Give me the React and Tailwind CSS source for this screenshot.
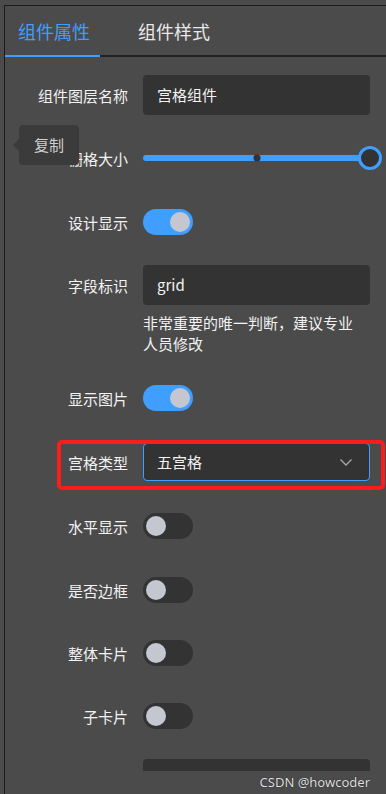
import React from "react";

const font = { fontFamily: '"Noto Sans CJK SC", "Noto Sans", sans-serif' };

function Switch({ on }) {
  return (
    <div
      className={
        "relative w-[50px] h-[26px] rounded-full " +
        (on ? "bg-[#409eff]" : "bg-[#333333]")
      }
    >
      <div
        className={
          "absolute top-[3px] w-[20px] h-[20px] rounded-full bg-[#c4c7cf] " +
          (on ? "left-[27px]" : "left-[3px]")
        }
      />
    </div>
  );
}

function Row({ label, mb, children }) {
  return (
    <div className={"flex items-center h-[40px] " + mb}>
      <div className="w-[123px] text-right text-[15px] text-[#f2f2f2] shrink-0 leading-none">
        {label}
      </div>
      <div className="ml-[15px] flex-1 h-full flex items-center">{children}</div>
    </div>
  );
}

export default function App() {
  return (
    <div
      className="relative w-[386px] h-[794px] bg-[#4b4b4b] overflow-hidden pt-[5px] pl-[4px]"
      style={font}
    >
      <div className="border-t border-l border-[#1c1c1c] h-full">
        {/* Tabs */}
        <div className="flex items-center h-[49px]">
          <div className="w-[95px] pl-[13px] text-[18px] text-[#409eff] leading-none">
            组件属性
          </div>
          <div className="pl-[38px] text-[18px] text-[#e8e8e8] leading-none">
            组件样式
          </div>
        </div>
        <div className="h-[2px] bg-[#222222] flex">
          <div className="w-[95px] h-full bg-[#409eff]" />
        </div>

        {/* Form */}
        <div className="pt-[18px] pr-[16px]">
          <Row label="组件图层名称" mb="mb-[23px]">
            <div className="w-full h-[40px] rounded-[4px] bg-[#333333] flex items-center pl-[14px] text-[15px] text-[#f2f2f2]">
              宫格组件
            </div>
          </Row>
          <Row label="栅格大小" mb="mb-[24px]">
            <div className="relative w-full h-[6px] rounded-full bg-[#409eff]">
              <div className="absolute left-1/2 top-1/2 -translate-x-1/2 -translate-y-1/2 w-[7px] h-[7px] rounded-full bg-[#333333]" />
              <div className="absolute right-[-12px] top-1/2 -translate-y-1/2 w-[24px] h-[24px] rounded-full bg-[#333333] border-[3px] border-[#409eff]" />
            </div>
          </Row>
          <Row label="设计显示" mb="mb-[23px]">
            <Switch on />
          </Row>
          <Row label="字段标识" mb="">
            <div className="w-full h-[40px] rounded-[4px] bg-[#333333] flex items-center pl-[14px] text-[15px] text-[#f2f2f2]">
              grid
            </div>
          </Row>
          <div className="ml-[138px] mt-[7px] mb-[24px] text-[15px] leading-[21px] text-[#f2f2f2]">
            非常重要的唯一判断，建议专业
            <br />
            人员修改
          </div>
          <Row label="显示图片" mb="mb-[24px]">
            <Switch on />
          </Row>
          <Row label="宫格类型" mb="mb-[24px]">
            <div className="w-full h-[38px] rounded-[4px] bg-[#333333] border border-[#409eff] flex items-center justify-between pl-[13px] pr-[16px] text-[15px] text-[#f2f2f2]">
              <span>五宫格</span>
              <svg width="14" height="14" viewBox="0 0 14 14" fill="none">
                <path d="M1.5 4.5 L7 10 L12.5 4.5" stroke="#a8a8a8" strokeWidth="1.3" />
              </svg>
            </div>
          </Row>
          <Row label="水平显示" mb="mb-[24px]">
            <Switch />
          </Row>
          <Row label="是否边框" mb="mb-[23px]">
            <Switch />
          </Row>
          <Row label="整体卡片" mb="mb-[23px]">
            <Switch />
          </Row>
          <Row label="子卡片" mb="mb-[23px]">
            <Switch />
          </Row>
          <Row label="" mb="">
            <div className="w-full h-[40px] rounded-[4px] bg-[#333333]" />
          </Row>
        </div>
      </div>

      {/* Tooltip */}
      <div className="absolute left-[19px] top-[125px] w-[60px] h-[40px] rounded-[4px] bg-[#3b3b3c] flex items-center justify-center text-[15px] text-[#cfcfcf]">
        复制
        <div className="absolute left-[-6px] top-1/2 -translate-y-1/2 w-0 h-0 border-y-[6px] border-y-transparent border-r-[6px] border-r-[#3b3b3c]" />
      </div>

      {/* Red annotation box */}
      <div className="absolute left-[57px] top-[440px] w-[328px] h-[50px] border-4 border-[#fb1c1c] rounded-[5px]" />

      {/* Watermark */}
      <div className="absolute left-[5px] right-0 bottom-0 h-[23px] bg-[#4b4b4b] flex items-center justify-end pr-[16px] text-[13px] text-[#e0e0e0]" style={{ fontFamily: '"Noto Sans", sans-serif', textShadow: "0 0 1px #000" }}>
        CSDN @howcoder
      </div>
    </div>
  );
}
